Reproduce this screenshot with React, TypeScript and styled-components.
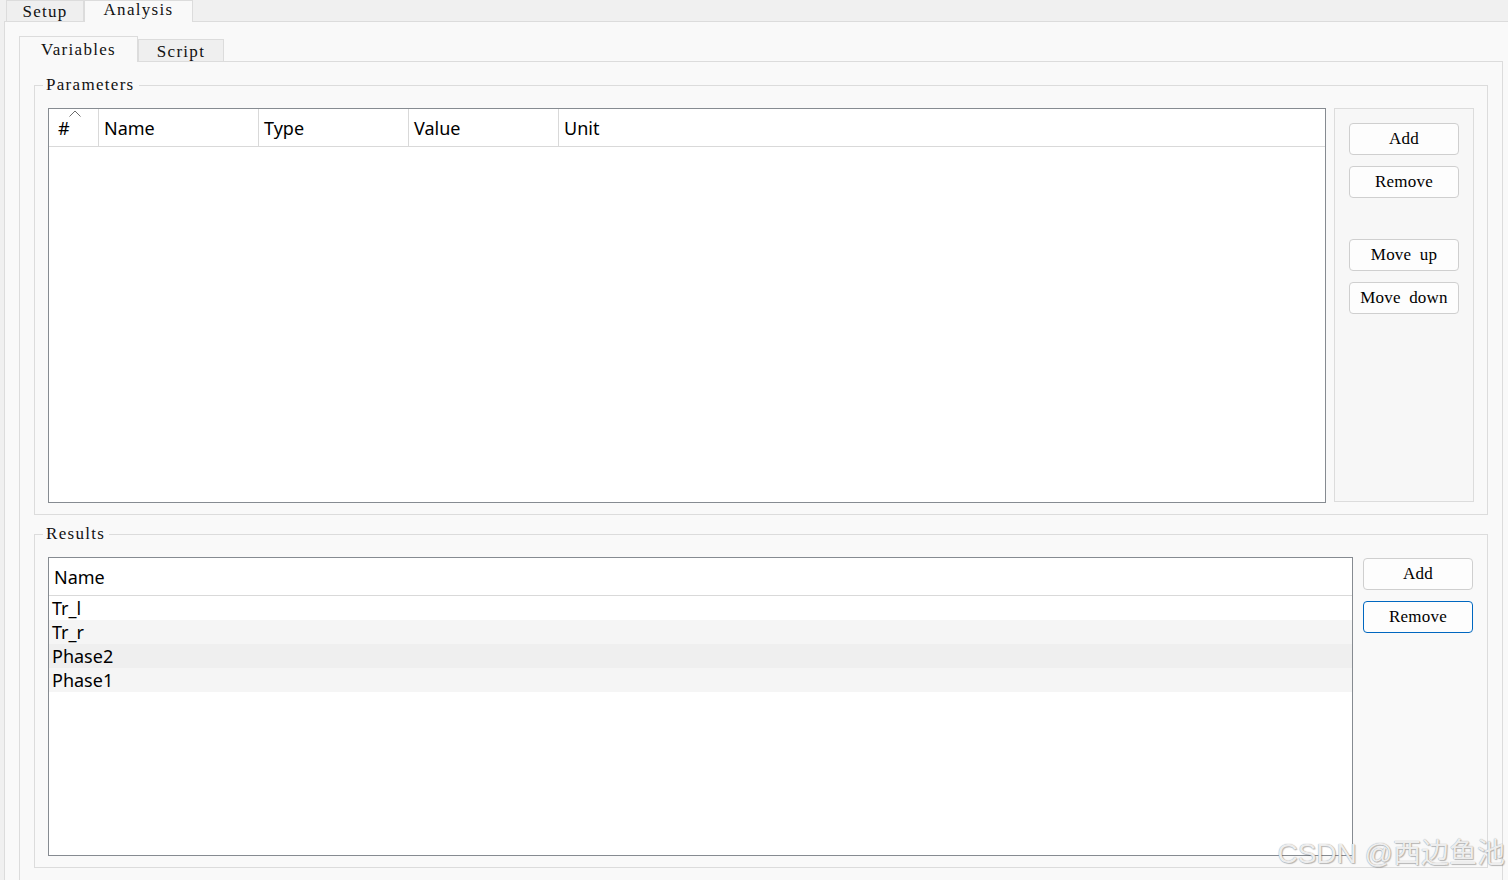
import React from 'react';
import styled, { createGlobalStyle } from 'styled-components';

const UI = `"Liberation Serif", "DejaVu Serif", serif`;
const SANS = `"Noto Sans", "Noto Sans CJK SC", sans-serif`;

const GlobalStyle = createGlobalStyle`
  html, body { margin: 0; padding: 0; background: #f0f0f0; }
  body { width: 1508px; height: 880px; overflow: hidden; }
  *, *::before, *::after { box-sizing: border-box; }
`;

const Window = styled.div`
  position: relative;
  width: 1508px;
  height: 880px;
  overflow: hidden;
  background: #f0f0f0;
  font-family: ${UI};
  font-size: 17px;
  letter-spacing: 1.3px;
  color: #111;
`;

const TabBar = styled.div<{ $h: number; $indent: number }>`
  display: flex;
  align-items: flex-end;
  height: ${p => p.$h}px;
  padding-left: ${p => p.$indent}px;
  position: relative;
  z-index: 1;
`;

const Tab = styled.div<{ $active?: boolean; $w: number; $h: number; $pt: number }>`
  width: ${p => p.$w}px;
  height: ${p => p.$h}px;
  padding-top: ${p => p.$pt}px;
  margin-bottom: ${p => (p.$active ? -1 : 0)}px;
  line-height: 18px;
  text-align: center;
  white-space: pre;
  background: ${p => (p.$active ? '#f9f9f9' : '#efefef')};
  border: 1px solid #dcdcdc;
  border-bottom: none;
  color: #111;
`;

const OuterPane = styled.div`
  margin-left: 4px;
  width: 1520px;
  height: 900px;
  border: 1px solid #dcdcdc;
  background: #f9f9f9;
  padding: 14px 0 0 14px;
`;

const InnerPane = styled.div`
  width: 1484px;
  height: 860px;
  border: 1px solid #dcdcdc;
  background: #f9f9f9;
  padding: 13px 14px 0 14px;
  display: flex;
  flex-direction: column;
  gap: 9px;
`;

const GroupBox = styled.fieldset`
  margin: 0;
  min-width: 0;
  border: 1px solid #dcdcdc;
  padding: 13px 13px 11px 13px;
`;

const GroupTitle = styled.legend`
  margin-left: -5px;
  padding: 0 4px 0 3px;
  line-height: 20px;
  font-family: ${UI};
  font-size: 17px;
  letter-spacing: 1.3px;
  color: #111;
`;

const GroupBody = styled.div<{ $gap: number }>`
  display: flex;
  align-items: flex-start;
  gap: ${p => p.$gap}px;
`;

const Table = styled.div<{ $h: number }>`
  flex: 1;
  min-width: 0;
  height: ${p => p.$h}px;
  border: 1px solid #868b91;
  background: #ffffff;
  display: flex;
  flex-direction: column;
  font-family: ${SANS};
  font-size: 18px;
  letter-spacing: 0;
  color: #000;
  overflow: hidden;
`;

const HeaderRow = styled.div`
  display: flex;
  flex: none;
  height: 38px;
  border-bottom: 1px solid #d9d9d9;
`;

const HeaderCell = styled.div<{ $w?: number; $pl?: number }>`
  position: relative;
  flex: ${p => (p.$w ? `0 0 ${p.$w}px` : '1')};
  padding-left: ${p => p.$pl ?? 5}px;
  line-height: 38px;
  border-right: ${p => (p.$w ? '1px solid #d9d9d9' : 'none')};
`;

const SortMark = styled.svg`
  position: absolute;
  top: 1px;
  left: 20px;
`;

const Row = styled.div<{ $bg: string }>`
  flex: none;
  height: 24px;
  line-height: 24px;
  padding-left: 3px;
  background: ${p => p.$bg};
`;

const ButtonPanel = styled.div`
  flex: 0 0 140px;
  height: 394px;
  border: 1px solid #dcdcdc;
  background: #f7f7f7;
  padding: 14px;
  display: flex;
  flex-direction: column;
  gap: 11px;
`;

const ButtonColumn = styled.div`
  flex: 0 0 110px;
  margin: 1px 1px 0 0;
  display: flex;
  flex-direction: column;
  gap: 11px;
`;

const Spacer = styled.div<{ $h: number }>`
  height: ${p => p.$h}px;
`;

const Button = styled.button<{ $focused?: boolean }>`
  width: 110px;
  height: 32px;
  padding: 0;
  border: 1px solid ${p => (p.$focused ? '#0067c0' : '#cfcfcf')};
  border-radius: 4px;
  background: #fdfdfd;
  font-family: ${UI};
  font-size: 17px;
  letter-spacing: 0.2px;
  word-spacing: 4px;
  white-space: pre;
  color: #000;
  text-align: center;
`;

const Watermark = styled.div`
  position: absolute;
  right: 3px;
  bottom: 12px;
  line-height: 1;
  font-family: "Liberation Sans", "Noto Sans CJK SC", sans-serif;
  font-size: 28px;
  letter-spacing: 0;
  color: rgba(255, 255, 255, 0.85);
  text-shadow: 0 0 1px #8a8a8a, 1px 1px 1px rgba(0, 0, 0, 0.25);
  pointer-events: none;
`;

const results = ['Tr_l', 'Tr_r', 'Phase2', 'Phase1'];
const rowBg = ['#ffffff', '#f5f5f5', '#efefef', '#f5f5f5'];

export default function App() {
  return (
    <Window>
      <GlobalStyle />
      <TabBar $h={21} $indent={6}>
        <Tab $w={78} $h={21} $pt={2}>Setup</Tab>
        <Tab $active $w={109} $h={22} $pt={0}>Analysis</Tab>
      </TabBar>
      <OuterPane>
        <TabBar $h={25} $indent={0}>
          <Tab $active $w={119} $h={26} $pt={4}>Variables</Tab>
          <Tab $w={86} $h={22} $pt={3}>Script</Tab>
        </TabBar>
        <InnerPane>
          <GroupBox>
            <GroupTitle>Parameters</GroupTitle>
            <GroupBody $gap={8}>
              <Table $h={395}>
                <HeaderRow>
                  <HeaderCell $w={50} $pl={9}>
                    <SortMark width="12" height="7" viewBox="0 0 12 7">
                      <path d="M0.5 6.5 L6 1 L11.5 6.5" fill="none" stroke="#6b6b6b" strokeWidth="1" />
                    </SortMark>
                    #
                  </HeaderCell>
                  <HeaderCell $w={160}>Name</HeaderCell>
                  <HeaderCell $w={150}>Type</HeaderCell>
                  <HeaderCell $w={150}>Value</HeaderCell>
                  <HeaderCell>Unit</HeaderCell>
                </HeaderRow>
              </Table>
              <ButtonPanel>
                <Button>Add</Button>
                <Button>Remove</Button>
                <Spacer $h={19} />
                <Button>Move up</Button>
                <Button>Move down</Button>
              </ButtonPanel>
            </GroupBody>
          </GroupBox>
          <GroupBox>
            <GroupTitle>Results</GroupTitle>
            <GroupBody $gap={10}>
              <Table $h={299}>
                <HeaderRow>
                  <HeaderCell>Name</HeaderCell>
                </HeaderRow>
                {results.map((r, i) => (
                  <Row key={r} $bg={rowBg[i]}>{r}</Row>
                ))}
              </Table>
              <ButtonColumn>
                <Button>Add</Button>
                <Button $focused>Remove</Button>
              </ButtonColumn>
            </GroupBody>
          </GroupBox>
        </InnerPane>
      </OuterPane>
      <Watermark>CSDN @西边鱼池</Watermark>
    </Window>
  );
}
